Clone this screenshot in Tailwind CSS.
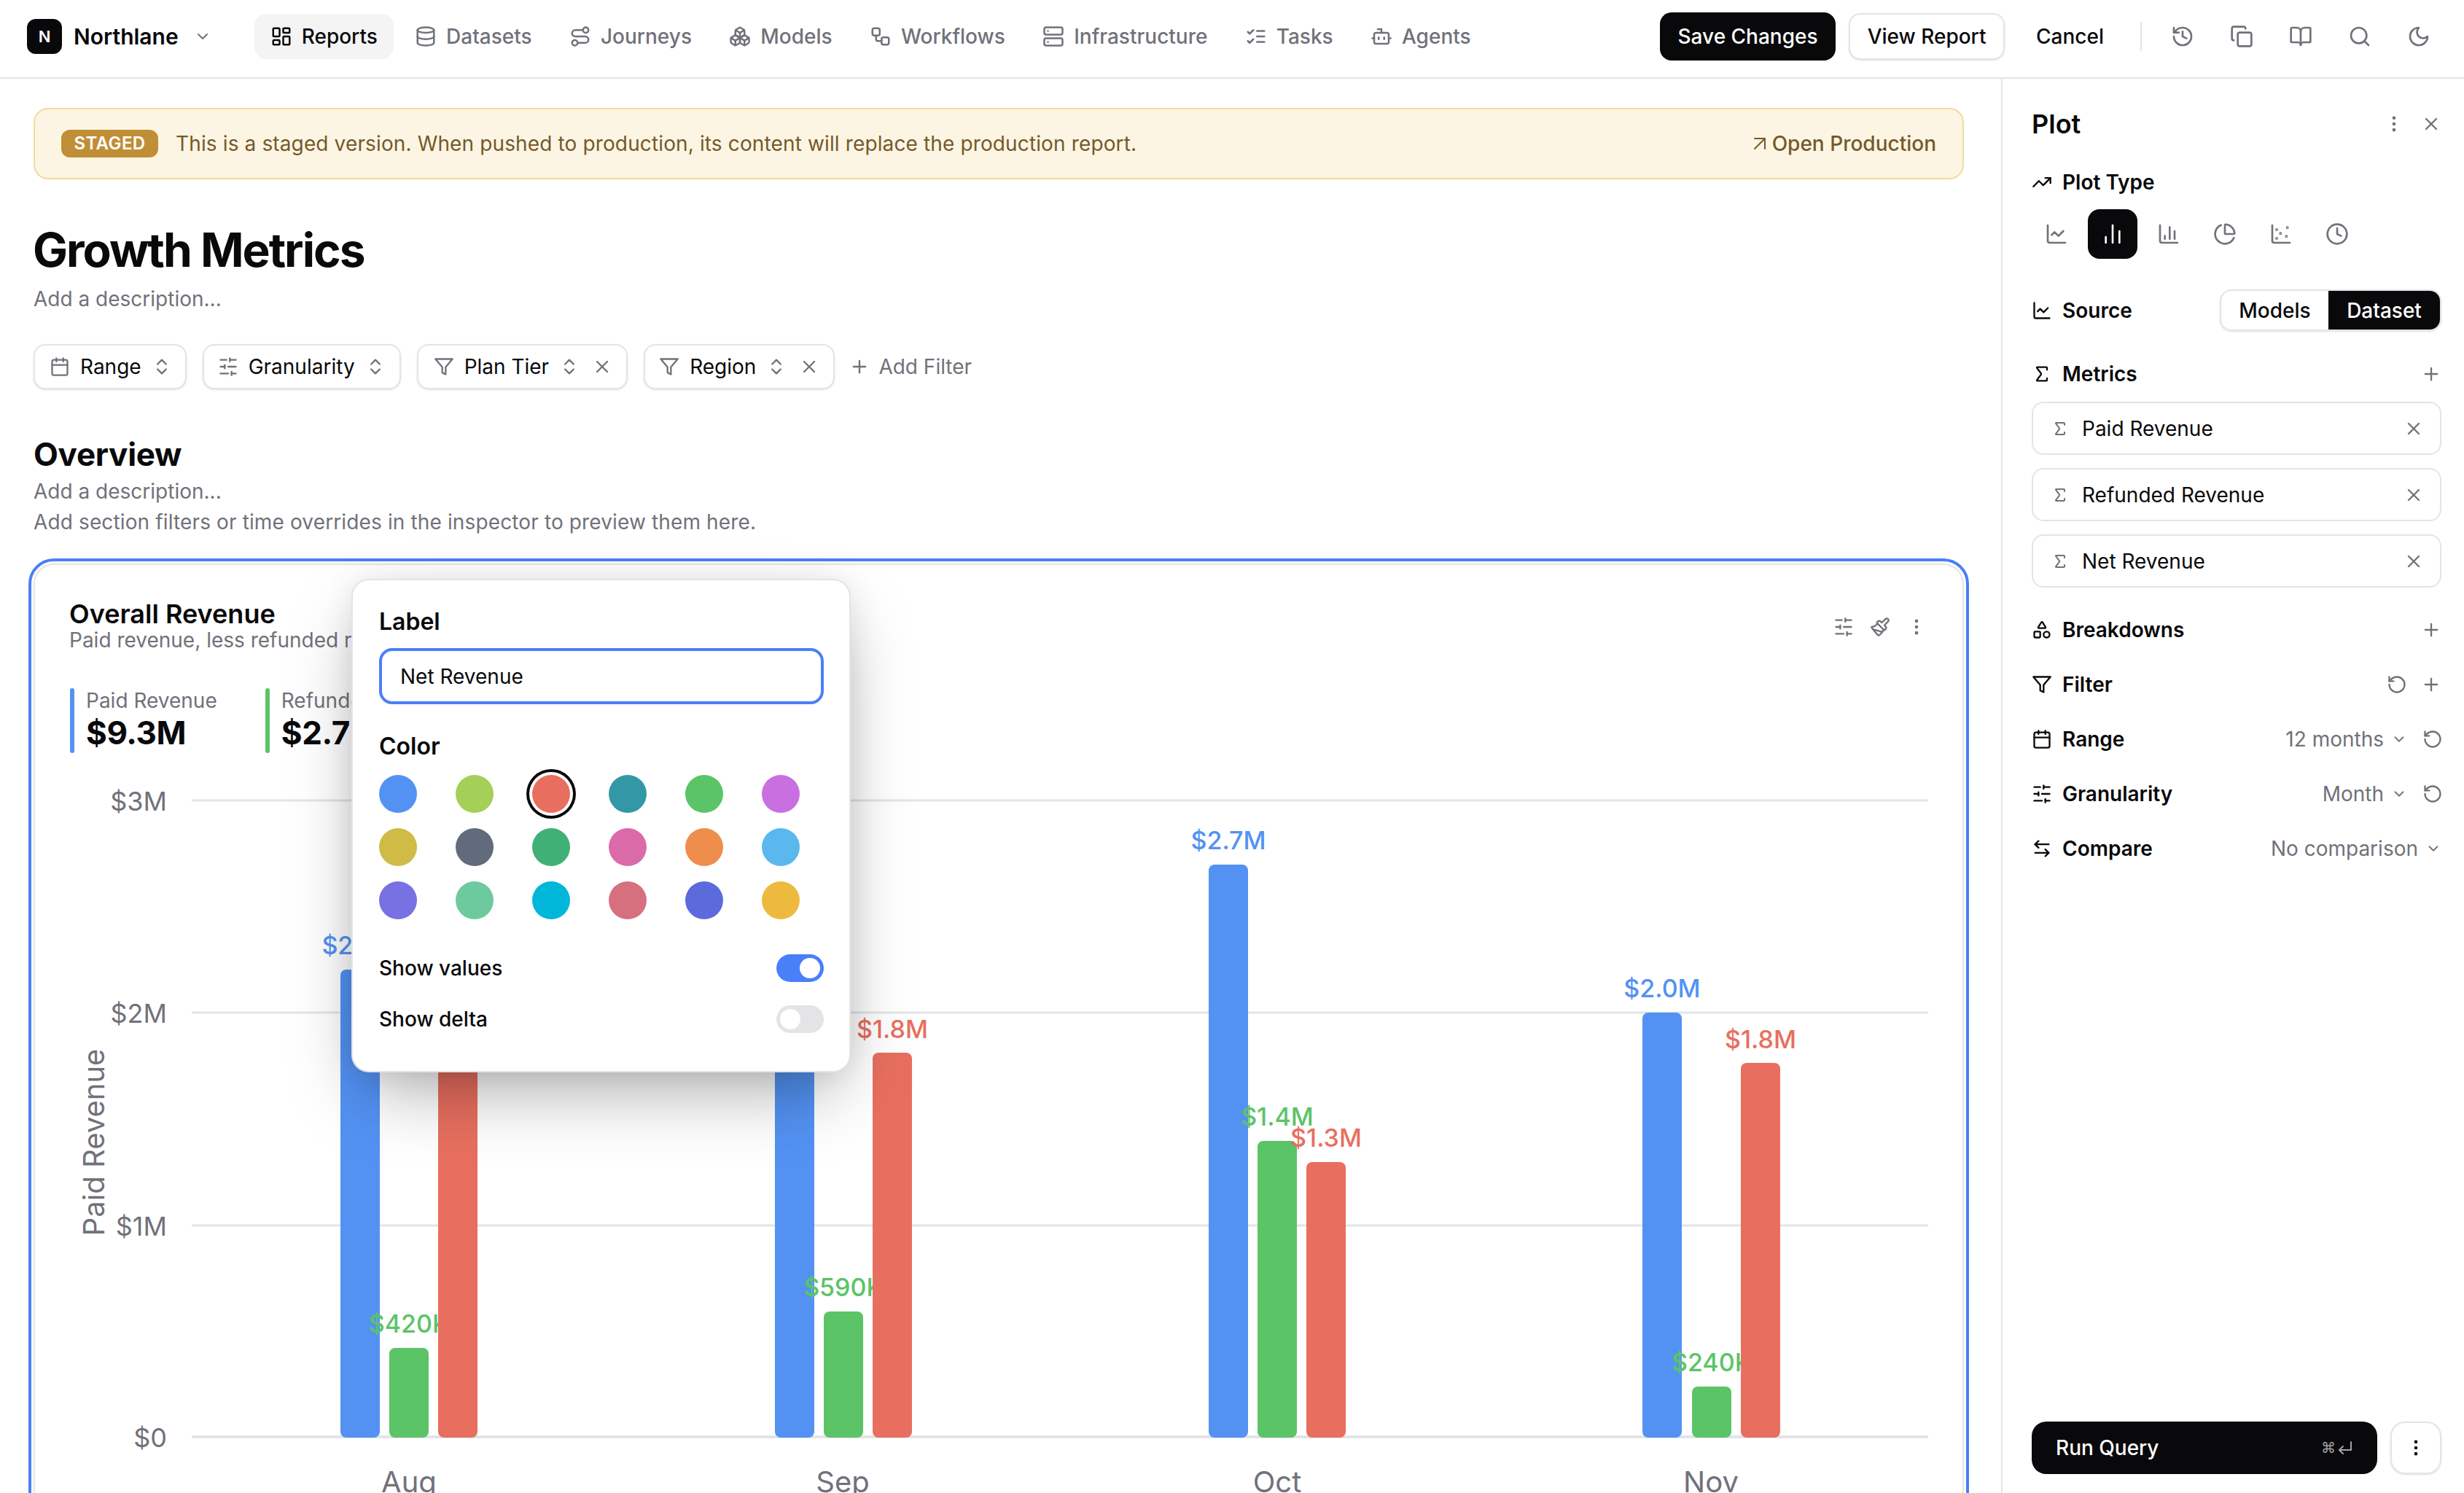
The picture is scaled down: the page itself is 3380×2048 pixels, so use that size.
<!DOCTYPE html>
<html lang="en">
<head>
  <meta charset="UTF-8" />
  <title>Growth Metrics</title>
  <script src="https://cdn.jsdelivr.net/npm/@tailwindcss/browser@4"></script>
</head>
<body class="h-screen overflow-hidden bg-white font-['Inter',sans-serif] text-[28px] text-[#09090b]">

<!-- icon sprite -->
<svg class="hidden">
  <defs>
    <g id="g-kebab"><circle cx="12" cy="5" r="1"/><circle cx="12" cy="12" r="1"/><circle cx="12" cy="19" r="1"/></g>
  </defs>
  <symbol id="i-dashboard" viewBox="0 0 24 24"><rect x="3" y="3" width="7" height="9" rx="1"/><rect x="14" y="3" width="7" height="5" rx="1"/><rect x="14" y="12" width="7" height="9" rx="1"/><rect x="3" y="16" width="7" height="5" rx="1"/></symbol>
  <symbol id="i-database" viewBox="0 0 24 24"><ellipse cx="12" cy="5" rx="9" ry="3"/><path d="M3 5V19A9 3 0 0 0 21 19V5"/><path d="M3 12A9 3 0 0 0 21 12"/></symbol>
  <symbol id="i-route" viewBox="0 0 24 24"><circle cx="6" cy="19" r="3"/><path d="M9 19h8.5a3.5 3.5 0 0 0 0-7h-11a3.5 3.5 0 0 1 0-7H15"/><circle cx="18" cy="5" r="3"/></symbol>
  <symbol id="i-boxes" viewBox="0 0 24 24"><path d="M2.97 12.92A2 2 0 0 0 2 14.63v3.24a2 2 0 0 0 .97 1.71l3 1.8a2 2 0 0 0 2.06 0L12 19v-5.5l-5-3-4.03 2.42Z"/><path d="m7 16.5-4.74-2.85"/><path d="m7 16.5 5-3"/><path d="M7 16.5v5.17"/><path d="M12 13.5V19l3.97 2.38a2 2 0 0 0 2.06 0l3-1.8a2 2 0 0 0 .97-1.71v-3.24a2 2 0 0 0-.97-1.71L17 10.5l-5 3Z"/><path d="m17 16.5-5-3"/><path d="m17 16.5 4.74-2.85"/><path d="M17 16.5v5.17"/><path d="M7.97 4.42A2 2 0 0 0 7 6.13v4.37l5 3 5-3V6.13a2 2 0 0 0-.97-1.71l-3-1.8a2 2 0 0 0-2.06 0l-3 1.8Z"/><path d="M12 8 7.26 5.15"/><path d="m12 8 4.74-2.85"/><path d="M12 13.5V8"/></symbol>
  <symbol id="i-workflow" viewBox="0 0 24 24"><rect x="3" y="3" width="8" height="8" rx="2"/><path d="M7 11v4a2 2 0 0 0 2 2h4"/><rect x="13" y="13" width="8" height="8" rx="2"/></symbol>
  <symbol id="i-server" viewBox="0 0 24 24"><rect x="2" y="2" width="20" height="8" rx="2"/><rect x="2" y="14" width="20" height="8" rx="2"/><path d="M6 6h.01"/><path d="M6 18h.01"/></symbol>
  <symbol id="i-tasks" viewBox="0 0 24 24"><path d="m3 17 2 2 4-4"/><path d="m3 7 2 2 4-4"/><path d="M13 6h8"/><path d="M13 12h8"/><path d="M13 18h8"/></symbol>
  <symbol id="i-bot" viewBox="0 0 24 24"><path d="M12 8V4H8"/><rect x="4" y="8" width="16" height="12" rx="2"/><path d="M2 14h2"/><path d="M20 14h2"/><path d="M15 13v2"/><path d="M9 13v2"/></symbol>
  <symbol id="i-chevron" viewBox="0 0 24 24"><path d="m6 9 6 6 6-6"/></symbol>
  <symbol id="i-history" viewBox="0 0 24 24"><path d="M3 12a9 9 0 1 0 9-9 9.75 9.75 0 0 0-6.74 2.74L3 8"/><path d="M3 3v5h5"/><path d="M12 7v5l4 2"/></symbol>
  <symbol id="i-copy" viewBox="0 0 24 24"><rect x="8" y="8" width="14" height="14" rx="2"/><path d="M4 16c-1.1 0-2-.9-2-2V4c0-1.1.9-2 2-2h10c1.1 0 2 .9 2 2"/></symbol>
  <symbol id="i-book" viewBox="0 0 24 24"><path d="M12 7v14"/><path d="M3 18a1 1 0 0 1-1-1V4a1 1 0 0 1 1-1h5a4 4 0 0 1 4 4 4 4 0 0 1 4-4h5a1 1 0 0 1 1 1v13a1 1 0 0 1-1 1h-6a3 3 0 0 0-3 3 3 3 0 0 0-3-3z"/></symbol>
  <symbol id="i-search" viewBox="0 0 24 24"><path d="m21 21-4.34-4.34"/><circle cx="11" cy="11" r="8"/></symbol>
  <symbol id="i-moon" viewBox="0 0 24 24"><path d="M12 3a6 6 0 0 0 9 9 9 9 0 1 1-9-9Z"/></symbol>
  <symbol id="i-arrow-ur" viewBox="0 0 24 24"><path d="M5 5h14v14"/><path d="M5 19 19 5"/></symbol>
  <symbol id="i-calendar" viewBox="0 0 24 24"><path d="M8 2v4"/><path d="M16 2v4"/><rect x="3" y="4" width="18" height="18" rx="2"/><path d="M3 10h18"/></symbol>
  <symbol id="i-sliders" viewBox="0 0 24 24"><path d="M21 4h-7"/><path d="M10 4H3"/><path d="M21 12h-9"/><path d="M8 12H3"/><path d="M21 20h-5"/><path d="M12 20H3"/><path d="M14 2v4"/><path d="M8 10v4"/><path d="M16 18v4"/></symbol>
  <symbol id="i-updown" viewBox="0 0 24 24"><path d="m7 15 5 5 5-5"/><path d="m7 9 5-5 5 5"/></symbol>
  <symbol id="i-filter" viewBox="0 0 24 24"><path d="M22 3H2l8 9.46V19l4 2v-8.54L22 3Z"/></symbol>
  <symbol id="i-x" viewBox="0 0 24 24"><path d="M18 6 6 18"/><path d="m6 6 12 12"/></symbol>
  <symbol id="i-plus" viewBox="0 0 24 24"><path d="M5 12h14"/><path d="M12 5v14"/></symbol>
  <symbol id="i-kebab" viewBox="0 0 24 24"><use href="#g-kebab"/></symbol>
  <symbol id="i-trending" viewBox="0 0 24 24"><path d="M22 7 13.5 15.5 8.5 10.5 2 17"/><path d="M16 7h6v6"/></symbol>
  <symbol id="i-chart-line" viewBox="0 0 24 24"><path d="M3 3v16a2 2 0 0 0 2 2h16"/><path d="m19 9-5 5-4-4-3 3"/></symbol>
  <symbol id="i-chart-bars" viewBox="0 0 24 24"><path d="M5 21v-6"/><path d="M12 21V3"/><path d="M19 21V9"/></symbol>
  <symbol id="i-chart-column" viewBox="0 0 24 24"><path d="M3 3v16a2 2 0 0 0 2 2h16"/><path d="M18 17V9"/><path d="M13 17V5"/><path d="M8 17v-3"/></symbol>
  <symbol id="i-pie" viewBox="0 0 24 24"><path d="M21 12c.552 0 1.005-.449.95-.998a10 10 0 0 0-8.953-8.951c-.55-.055-.998.398-.998.95v8a1 1 0 0 0 1 1z"/><path d="M21.21 15.89A10 10 0 1 1 8 2.83"/></symbol>
  <symbol id="i-scatter" viewBox="0 0 24 24"><circle cx="7.5" cy="7.5" r=".5"/><circle cx="18.5" cy="5.5" r=".5"/><circle cx="11.5" cy="11.5" r=".5"/><circle cx="7.5" cy="16.5" r=".5"/><circle cx="17.5" cy="14.5" r=".5"/><path d="M3 3v16a2 2 0 0 0 2 2h16"/></symbol>
  <symbol id="i-clock" viewBox="0 0 24 24"><circle cx="12" cy="12" r="10"/><path d="M12 6v6l4 2"/></symbol>
  <symbol id="i-sigma" viewBox="0 0 24 24"><path d="M18 7V5a1 1 0 0 0-1-1H6.5a.5.5 0 0 0-.4.8l4.5 6a2 2 0 0 1 0 2.4l-4.5 6a.5.5 0 0 0 .4.8H17a1 1 0 0 0 1-1v-2"/></symbol>
  <symbol id="i-shapes" viewBox="0 0 24 24"><path d="M8.3 10a.7.7 0 0 1-.626-1.079L11.4 3a.7.7 0 0 1 1.198-.043L16.3 8.9a.7.7 0 0 1-.572 1.1Z"/><rect x="3" y="14" width="7" height="7" rx="1"/><circle cx="17.5" cy="17.5" r="3.5"/></symbol>
  <symbol id="i-reset" viewBox="0 0 24 24"><path d="M3 12a9 9 0 1 0 9-9 9.75 9.75 0 0 0-6.74 2.74L3 8"/><path d="M3 3v5h5"/></symbol>
  <symbol id="i-compare" viewBox="0 0 24 24"><path d="M8 3 4 7l4 4"/><path d="M4 7h16"/><path d="m16 21 4-4-4-4"/><path d="M20 17H4"/></symbol>
  <symbol id="i-brush" viewBox="0 0 24 24"><path d="m14.622 17.897-10.68-2.913"/><path d="M18.376 2.622a1 1 0 1 1 3.002 3.002L17.36 9.643a.5.5 0 0 0 0 .707l.944.944a2.41 2.41 0 0 1 0 3.408l-.944.944a.5.5 0 0 1-.707 0L8.354 7.348a.5.5 0 0 1 0-.707l.944-.944a2.41 2.41 0 0 1 3.408 0l.944.944a.5.5 0 0 0 .707 0z"/><path d="M9 8c-1.804 2.71-3.97 3.46-6.583 3.948a.507.507 0 0 0-.302.819l7.32 8.883a1 1 0 0 0 1.185.204C12.735 20.405 16 16.792 16 15"/></symbol>
  <symbol id="i-enter" viewBox="0 0 24 24"><path d="M20 4v11H4"/><path d="m9 10-5 5 5 5"/></symbol>
</svg>

<!-- Top bar -->
<header class="flex h-[108px] items-center border-b-2 border-[#e4e4e7] pb-[6px] pl-[37px] pr-[46px]">
  <div class="flex size-[48px] items-center justify-center rounded-[12px] bg-[#09090b] text-[22px] font-semibold text-white">N</div>
  <span class="ml-[16px] text-[30px] font-semibold">Northlane</span>
  <svg class="ml-[21px] size-[24px] fill-none stroke-[#71717a] stroke-2 [stroke-linecap:round] [stroke-linejoin:round]"><use href="#i-chevron"/></svg>

  <!-- Nav -->
  <nav class="ml-[59px] flex items-center gap-[7.3px] font-medium text-[#71717a] [&_svg]:size-[30px] [&_svg]:fill-none [&_svg]:stroke-current [&_svg]:stroke-2 [&_svg]:[stroke-linecap:round] [&_svg]:[stroke-linejoin:round]">
    <a class="flex h-[62px] items-center gap-[13px] rounded-[16px] bg-[#f4f4f5] px-[22px] text-[#09090b]"><svg><use href="#i-dashboard"/></svg>Reports</a>
    <a class="flex h-[62px] items-center gap-[13px] px-[22px]"><svg><use href="#i-database"/></svg>Datasets</a>
    <a class="flex h-[62px] items-center gap-[13px] px-[22px]"><svg><use href="#i-route"/></svg>Journeys</a>
    <a class="flex h-[62px] items-center gap-[13px] px-[22px]"><svg><use href="#i-boxes"/></svg>Models</a>
    <a class="flex h-[62px] items-center gap-[13px] px-[22px]"><svg><use href="#i-workflow"/></svg>Workflows</a>
    <a class="flex h-[62px] items-center gap-[13px] px-[22px]"><svg><use href="#i-server"/></svg>Infrastructure</a>
    <a class="flex h-[62px] items-center gap-[13px] px-[22px]"><svg><use href="#i-tasks"/></svg>Tasks</a>
    <a class="flex h-[62px] items-center gap-[13px] px-[22px]"><svg><use href="#i-bot"/></svg>Agents</a>
  </nav>

  <!-- Actions -->
  <div class="ml-auto flex items-center font-medium">
    <button class="h-[66px] w-[241px] rounded-[16px] bg-[#09090b] text-white">Save Changes</button>
    <button class="ml-[18px] h-[64px] w-[214px] rounded-[16px] border-2 border-[#e4e4e7] bg-white shadow-sm">View Report</button>
    <button class="ml-[43px]">Cancel</button>
    <div class="ml-[50px] h-[40px] w-[2px] bg-[#e4e4e7]"></div>
    <div class="ml-[40px] flex items-center gap-[49px] text-[#71717a] [&_svg]:size-[32px] [&_svg]:fill-none [&_svg]:stroke-current [&_svg]:stroke-2 [&_svg]:[stroke-linecap:round] [&_svg]:[stroke-linejoin:round]">
      <svg><use href="#i-history"/></svg>
      <svg><use href="#i-copy"/></svg>
      <svg><use href="#i-book"/></svg>
      <svg><use href="#i-search"/></svg>
      <svg><use href="#i-moon"/></svg>
    </div>
  </div>
</header>

<div class="flex h-[1940px]">
  <!-- Report -->
  <main class="h-full w-[2745px] shrink-0 overflow-hidden pl-[46px] pr-[51px] pt-[40px] [&_svg.ic]:fill-none [&_svg.ic]:stroke-current [&_svg.ic]:stroke-2 [&_svg.ic]:[stroke-linecap:round] [&_svg.ic]:[stroke-linejoin:round]">
    <!-- Banner -->
    <div class="flex h-[98px] items-center rounded-[20px] border-2 border-[#f0dc9b] bg-[#fcf5e3] pl-[36px] pr-[36px] text-[#75592a]">
      <span class="flex h-[38px] w-[133px] items-center justify-center rounded-[12px] bg-[#c08e35] text-[24px] font-semibold tracking-[0.4px] text-white">STAGED</span>
      <span class="ml-[24px] tracking-[0.13px]">This is a staged version. When pushed to production, its content will replace the production report.</span>
      <a class="ml-auto flex items-center gap-[5px] font-medium"><svg class="ic size-[24px]"><use href="#i-arrow-ur"/></svg>Open Production</a>
    </div>

    <h1 class="-ml-[1px] mt-[57px] text-[64px] leading-[80px] font-bold tracking-[-2px]">Growth Metrics</h1>
    <p class="mt-[7px] leading-[40px] text-[#71717a]">Add a description...</p>

    <!-- Filters -->
    <div class="mt-[42px] flex items-center gap-[22px]">
      <div class="flex h-[62px] items-center gap-[14px] rounded-[16px] border-2 border-[#e4e4e7] pl-[20px] pr-[18px] shadow-sm">
        <svg class="ic size-[28px] text-[#71717a]"><use href="#i-calendar"/></svg>Range<svg class="ic size-[28px] text-[#71717a]"><use href="#i-updown"/></svg>
      </div>
      <div class="flex h-[62px] items-center gap-[14px] rounded-[16px] border-2 border-[#e4e4e7] px-[19px] shadow-sm">
        <svg class="ic size-[28px] text-[#71717a]"><use href="#i-sliders"/></svg>Granularity<svg class="ic size-[28px] text-[#71717a]"><use href="#i-updown"/></svg>
      </div>
      <div class="flex h-[62px] items-center gap-[14px] rounded-[16px] border-2 border-[#e4e4e7] pl-[21px] pr-[19px] shadow-sm">
        <svg class="ic size-[28px] text-[#71717a]"><use href="#i-filter"/></svg>Plan Tier<svg class="ic size-[28px] text-[#71717a]"><use href="#i-updown"/></svg><svg class="ic ml-[3px] size-[28px] text-[#71717a]"><use href="#i-x"/></svg>
      </div>
      <div class="flex h-[62px] items-center gap-[14px] rounded-[16px] border-2 border-[#e4e4e7] px-[19px] shadow-sm">
        <svg class="ic size-[28px] text-[#71717a]"><use href="#i-filter"/></svg>Region<svg class="ic size-[28px] text-[#71717a]"><use href="#i-updown"/></svg><svg class="ic ml-[3px] size-[28px] text-[#71717a]"><use href="#i-x"/></svg>
      </div>
      <div class="-ml-[2px] flex items-center gap-[12px] text-[#71717a]"><svg class="ic size-[28px]"><use href="#i-plus"/></svg>Add Filter</div>
    </div>

    <!-- Section -->
    <h2 class="mt-[61px] text-[44px] leading-[56px] font-bold tracking-[-0.3px]">Overview</h2>
    <p class="mt-[3px] leading-[40px] text-[#71717a]">Add a description...</p>
    <p class="mt-[2px] leading-[40px] tracking-[0.13px] text-[#71717a]">Add section filters or time overrides in the inspector to preview them here.</p>

    <!-- Chart card -->
    <section class="relative mt-[37px] h-[1400px] rounded-[28px] border-2 border-[#e4e4e7] outline-4 outline-offset-[3px] outline-[#4a7ffa]">
      <div class="flex items-center justify-between pl-[47px] pr-[49px] pt-[49px]">
        <div>
          <h3 class="text-[36px] leading-[36px] font-semibold">Overall Revenue</h3>
          <p class="leading-[36px] text-[#71717a]">Paid revenue, less refunded revenue</p>
        </div>
        <div class="flex items-center gap-[22px] text-[#71717a]">
          <svg class="ic size-[28px]"><use href="#i-sliders"/></svg>
          <svg class="ic size-[28px]"><use href="#i-brush"/></svg>
          <svg class="ic size-[28px]"><use href="#i-kebab"/></svg>
        </div>
      </div>

      <!-- KPIs -->
      <div class="mt-[48px] flex gap-[66px] pl-[48px]">
        <div class="flex gap-[16px]">
          <div class="h-[89px] w-[6px] rounded-full bg-[#5392f3]"></div>
          <div>
            <div class="leading-[34px] text-[#71717a]">Paid Revenue</div>
            <div class="text-[44px] leading-[55px] font-bold tracking-[-0.4px]">$9.3M</div>
          </div>
        </div>
        <div class="flex gap-[16px]">
          <div class="h-[89px] w-[6px] rounded-full bg-[#5bc467]"></div>
          <div>
            <div class="leading-[34px] text-[#71717a]">Refunded Revenue</div>
            <div class="text-[44px] leading-[55px] font-bold tracking-[-0.4px]">$2.7M</div>
          </div>
        </div>
      </div>

      <!-- Bar chart: viewBox is in page pixels -->
      <svg class="mt-[17px] block font-['Inter',sans-serif]" width="2646" height="1000" viewBox="48 1050 2646 1000">
        <g stroke="#e4e4e7" stroke-width="3">
          <line x1="263" x2="2645" y1="1098" y2="1098"/>
          <line x1="263" x2="2645" y1="1389" y2="1389"/>
          <line x1="263" x2="2645" y1="1681" y2="1681"/>
          <line x1="263" x2="2645" y1="1971" y2="1971" stroke-width="4"/>
        </g>
        <g fill="#71717a" font-size="36" text-anchor="end">
          <text x="229" y="1112">$3M</text>
          <text x="229" y="1403">$2M</text>
          <text x="229" y="1695">$1M</text>
          <text x="229" y="1985">$0</text>
        </g>
        <text transform="translate(143 1567) rotate(-90)" fill="#71717a" font-size="40" text-anchor="middle">Paid Revenue</text>
        <g fill="#71717a" font-size="40" text-anchor="middle">
          <text x="561" y="2047">Aug</text>
          <text x="1156" y="2047">Sep</text>
          <text x="1752" y="2047">Oct</text>
          <text x="2347" y="2047">Nov</text>
        </g>
        <g font-size="34" font-weight="500" text-anchor="middle">
          <!-- Paid -->
          <g fill="#5392f3">
            <rect x="467" y="1330" width="54" height="642" rx="8"/><text x="494" y="1309">$2.2M</text>
            <rect x="1063" y="1272" width="54" height="700" rx="8"/><text x="1090" y="1253">$2.4M</text>
            <rect x="1658" y="1186" width="54" height="786" rx="8"/><text x="1685" y="1165">$2.7M</text>
            <rect x="2253" y="1389" width="54" height="583" rx="8"/><text x="2280" y="1368">$2.0M</text>
          </g>
          <!-- Refunded -->
          <g fill="#5bc467">
            <rect x="534" y="1849" width="54" height="123" rx="8"/><text x="561" y="1828">$420K</text>
            <rect x="1130" y="1799" width="54" height="173" rx="8"/><text x="1157" y="1778">$590K</text>
            <rect x="1725" y="1565" width="54" height="407" rx="8"/><text x="1752" y="1544">$1.4M</text>
            <rect x="2321" y="1902" width="54" height="70" rx="8"/><text x="2348" y="1881">$240K</text>
          </g>
          <!-- Net -->
          <g fill="#e86f5f">
            <rect x="601" y="1453" width="54" height="519" rx="8"/><text x="628" y="1434">$1.8M</text>
            <rect x="1197" y="1444" width="54" height="528" rx="8"/><text x="1224" y="1424">$1.8M</text>
            <rect x="1792" y="1594" width="54" height="378" rx="8"/><text x="1819" y="1573">$1.3M</text>
            <rect x="2388" y="1458" width="54" height="514" rx="8"/><text x="2415" y="1438">$1.8M</text>
          </g>
        </g>
      </svg>

      <!-- Series popover -->
      <div class="absolute left-[434px] top-[19px] h-[677px] w-[685px] rounded-[24px] border-2 border-[#e4e4e7] bg-white px-[36px] pt-[37px] shadow-[0_40px_100px_-20px_rgba(0,0,0,0.35),0_0_40px_rgba(0,0,0,0.08)]">
        <div class="text-[32px] leading-[40px] font-semibold">Label</div>
        <div class="mt-[16px] flex h-[77px] w-[610px] items-center rounded-[18px] border-4 border-[#4a7ffa] pl-[25px]">Net Revenue</div>
        <div class="mt-[38px] text-[32px] leading-[40px] font-semibold">Color</div>
        <div class="mt-[19px] grid w-[577px] grid-cols-6 gap-x-[53px] gap-y-[21px] [&>div]:size-[52px] [&>div]:rounded-full">
          <div class="bg-[#5392f3]"></div><div class="bg-[#a5d058]"></div><div class="bg-[#e86f5f] shadow-[0_0_0_4px_#fff,0_0_0_8px_#09090b]"></div><div class="bg-[#3497a6]"></div><div class="bg-[#5bc467]"></div><div class="bg-[#c96fdf]"></div>
          <div class="bg-[#cfbb45]"></div><div class="bg-[#616b7c]"></div><div class="bg-[#41b077]"></div><div class="bg-[#da6aa8]"></div><div class="bg-[#ee8d4c]"></div><div class="bg-[#5bb8ee]"></div>
          <div class="bg-[#7771e3]"></div><div class="bg-[#6dca9f]"></div><div class="bg-[#00b7da]"></div><div class="bg-[#d6707f]"></div><div class="bg-[#5c6bdc]"></div><div class="bg-[#eeba3e]"></div>
        </div>
        <div class="mt-[48px] flex h-[38px] w-[610px] items-center justify-between font-medium">
          Show values
          <div class="flex h-[38px] w-[65px] items-center justify-end rounded-full bg-[#4a7ffa] p-[5px]"><div class="size-[28px] rounded-full bg-white"></div></div>
        </div>
        <div class="mt-[32px] flex h-[38px] w-[610px] items-center justify-between font-medium">
          Show delta
          <div class="flex h-[38px] w-[65px] items-center rounded-full bg-[#e4e4e7] p-[5px]"><div class="size-[28px] rounded-full bg-white"></div></div>
        </div>
      </div>
    </section>
  </main>

  <!-- Inspector -->
  <aside class="flex h-full w-[635px] flex-col border-l-2 border-[#e4e4e7] pb-[26px] pl-[40px] pr-[31px] pt-[38px] [&_svg]:fill-none [&_svg]:stroke-current [&_svg]:stroke-2 [&_svg]:[stroke-linecap:round] [&_svg]:[stroke-linejoin:round]">
    <div class="flex h-[48px] items-center">
      <span class="text-[36px] font-semibold">Plot</span>
      <svg class="ml-auto size-[28px] text-[#71717a]"><use href="#i-kebab"/></svg>
      <svg class="ml-[23px] size-[28px] text-[#71717a]"><use href="#i-x"/></svg>
    </div>

    <div class="mt-[38px] flex h-[36px] items-center gap-[14px] font-semibold"><svg class="size-[28px]"><use href="#i-trending"/></svg>Plot Type</div>
    <div class="mt-[19px] flex gap-[9px] text-[#71717a] [&>div]:flex [&>div]:size-[68px] [&>div]:items-center [&>div]:justify-center [&_svg]:size-[32px]">
      <div><svg><use href="#i-chart-line"/></svg></div>
      <div class="rounded-[16px] bg-[#09090b] text-white"><svg><use href="#i-chart-bars"/></svg></div>
      <div><svg><use href="#i-chart-column"/></svg></div>
      <div><svg><use href="#i-pie"/></svg></div>
      <div><svg><use href="#i-scatter"/></svg></div>
      <div><svg><use href="#i-clock"/></svg></div>
    </div>

    <div class="mt-[42px] flex h-[57px] items-center">
      <svg class="size-[28px]"><use href="#i-chart-line"/></svg>
      <span class="ml-[14px] font-semibold">Source</span>
      <div class="ml-auto flex h-[57px] overflow-hidden rounded-[16px] border-2 border-[#e4e4e7] font-medium shadow-sm">
        <div class="flex w-[147px] items-center justify-center">Models</div>
        <div class="flex w-[153px] items-center justify-center bg-[#09090b] text-white">Dataset</div>
      </div>
    </div>

    <div class="mt-[41px] flex h-[36px] items-center font-semibold">
      <svg class="size-[28px]"><use href="#i-sigma"/></svg>
      <span class="ml-[14px]">Metrics</span>
      <svg class="ml-auto size-[28px] text-[#71717a]"><use href="#i-plus"/></svg>
    </div>

    <div class="mt-[20px] flex flex-col gap-[18px]">
      <div class="flex h-[73px] items-center rounded-[16px] border-2 border-[#e4e4e7] pl-[25px] pr-[22px]">
        <svg class="size-[24px] text-[#71717a]"><use href="#i-sigma"/></svg><span class="ml-[18px]">Paid Revenue</span><svg class="ml-auto size-[28px] text-[#71717a]"><use href="#i-x"/></svg>
      </div>
      <div class="flex h-[73px] items-center rounded-[16px] border-2 border-[#e4e4e7] pl-[25px] pr-[22px]">
        <svg class="size-[24px] text-[#71717a]"><use href="#i-sigma"/></svg><span class="ml-[18px]">Refunded Revenue</span><svg class="ml-auto size-[28px] text-[#71717a]"><use href="#i-x"/></svg>
      </div>
      <div class="flex h-[73px] items-center rounded-[16px] border-2 border-[#e4e4e7] pl-[25px] pr-[22px]">
        <svg class="size-[24px] text-[#71717a]"><use href="#i-sigma"/></svg><span class="ml-[18px]">Net Revenue</span><svg class="ml-auto size-[28px] text-[#71717a]"><use href="#i-x"/></svg>
      </div>
    </div>

    <div class="mt-[40px] flex flex-col gap-[39px] [&>div]:flex [&>div]:h-[36px] [&>div]:items-center">
      <div class="font-semibold">
        <svg class="size-[28px]"><use href="#i-shapes"/></svg><span class="ml-[14px]">Breakdowns</span>
        <svg class="ml-auto size-[28px] text-[#71717a]"><use href="#i-plus"/></svg>
      </div>
      <div class="font-semibold">
        <svg class="size-[28px]"><use href="#i-filter"/></svg><span class="ml-[14px]">Filter</span>
        <svg class="ml-auto size-[28px] text-[#71717a]"><use href="#i-reset"/></svg>
        <svg class="ml-[19px] size-[28px] text-[#71717a]"><use href="#i-plus"/></svg>
      </div>
      <div>
        <svg class="size-[28px]"><use href="#i-calendar"/></svg><span class="ml-[14px] font-semibold">Range</span>
        <span class="ml-auto text-[#71717a]">12 months</span>
        <svg class="ml-[10px] size-[22px] text-[#71717a]"><use href="#i-chevron"/></svg>
        <svg class="ml-[21px] -mr-[2px] size-[28px] text-[#71717a]"><use href="#i-reset"/></svg>
      </div>
      <div>
        <svg class="size-[28px]"><use href="#i-sliders"/></svg><span class="ml-[14px] font-semibold">Granularity</span>
        <span class="ml-auto text-[#71717a]">Month</span>
        <svg class="ml-[10px] size-[22px] text-[#71717a]"><use href="#i-chevron"/></svg>
        <svg class="ml-[21px] -mr-[2px] size-[28px] text-[#71717a]"><use href="#i-reset"/></svg>
      </div>
      <div>
        <svg class="size-[28px]"><use href="#i-compare"/></svg><span class="ml-[14px] font-semibold">Compare</span>
        <span class="ml-auto text-[#71717a]">No comparison</span>
        <svg class="ml-[10px] size-[22px] text-[#71717a]"><use href="#i-chevron"/></svg>
      </div>
    </div>

    <div class="mt-auto flex items-center gap-[18px]">
      <button class="flex h-[72px] w-[474px] items-center rounded-[20px] bg-[#09090b] pl-[33px] pr-[32px] font-medium text-white">
        Run Query
        <span class="ml-auto flex items-center gap-[1px] text-[#a1a1aa]"><span class="font-['DejaVu_Sans',sans-serif] text-[20px]">⌘</span><svg class="size-[24px]"><use href="#i-enter"/></svg></span>
      </button>
      <button class="flex h-[72px] w-[70px] items-center justify-center rounded-[20px] border-2 border-[#e4e4e7] shadow-sm"><svg class="size-[28px]"><use href="#i-kebab"/></svg></button>
    </div>
  </aside>
</div>

</body>
</html>
